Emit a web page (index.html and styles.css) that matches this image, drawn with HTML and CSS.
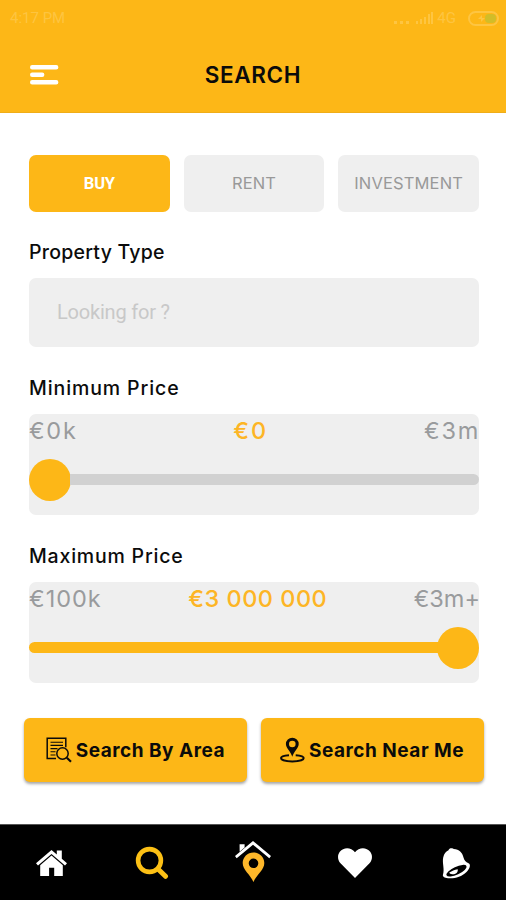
FILE: index.html
```html
<!DOCTYPE html>
<html lang="en">
<head>
<meta charset="utf-8">
<title>Search</title>
<link rel="stylesheet" href="styles.css">
</head>
<body>
<div class="app">
  <header class="header">
    <div class="status">
      <span>4:17 PM</span>
      <div class="status-right">
        <svg width="40" height="14" viewBox="0 0 40 14" fill="currentColor"><path d="M0 10h3v3H0zM6 10h3v3H6zM12 10h3v3h-3zM22 10h2v3h-2zM26 8h2v5h-2zM30 6h2v7h-2zM34 3h2v10h-2zM37 1h2v12h-2z"/></svg>
        <span>4G</span>
        <svg class="battery" width="31" height="15" viewBox="0 0 31 15"><rect x="1" y="1" width="29" height="13" rx="6.500" fill="none" stroke="currentColor" stroke-width="2"/><rect class="charge" x="17" y="3" width="11" height="9" rx="4"/><path d="M10 8l4-4v3h3l-4 4V8z" fill="currentColor"/></svg>
      </div>
    </div>
    <div class="title-bar">
      <svg class="menu" width="29" height="20" viewBox="0 0 29 20"><path d="M2.200 2.200h24M2.200 9.700h10M2.200 17.300h24"/></svg>
      <h1>SEARCH</h1>
    </div>
  </header>

  <main class="content">
    <div class="tabs">
      <div class="tab active">BUY</div>
      <div class="tab rent">RENT</div>
      <div class="tab">INVESTMENT</div>
    </div>

    <section class="group">
      <h2 class="l-type">Property Type</h2>
      <div class="field">Looking for ?</div>
    </section>

    <section class="group">
      <h2 class="l-min">Minimum Price</h2>
      <div class="range">
        <div class="prices short"><span>€0k</span><strong>€0</strong><span>€3m</span></div>
        <div class="slider"><i class="track"></i><i class="thumb"></i></div>
      </div>
    </section>

    <section class="group">
      <h2 class="l-max">Maximum Price</h2>
      <div class="range">
        <div class="prices"><span>€100k</span><strong>€3 000 000</strong><span class="limit">€3m+</span></div>
        <div class="slider full"><i class="track"></i><i class="thumb"></i></div>
      </div>
    </section>

    <div class="actions">
      <div class="button">
        <svg width="26" height="26" viewBox="0 0 26 26" fill="none" stroke="currentColor"><path stroke-width="1.500" d="M10 21.500H1.200V1.200h18.600v9"/><path stroke-width="1.100" d="M4.500 5.200H17M4.500 8.400H17M4.500 11.600h7M4.500 14.800h5M4.500 18h5"/><circle cx="16.500" cy="16.500" r="5.700" stroke-width="1.500"/><path stroke-width="2.200" d="M20.800 20.800l4.200 4"/></svg>
        <span>Search By Area</span>
      </div>
      <div class="button">
        <svg width="25" height="26" viewBox="0 0 25 26"><path fill="currentColor" fill-rule="evenodd" d="M12.300 0.700a6.400 6.400 0 0 0-6.400 6.400c0 4 5 7.700 6.400 12.700 1.400-5 6.400-8.700 6.400-12.700A6.400 6.400 0 0 0 12.300.7zm0 3a3.300 3.300 0 1 1 0 6.600 3.300 3.300 0 0 1 0-6.600z"/><path fill="none" stroke="currentColor" stroke-width="2" d="M9 18.200c-4.500.3-8 1.300-8 2.900 0 1.900 5 3.300 11.300 3.300S23.700 23 23.700 21.100c0-1.600-3.500-2.600-8-2.900"/></svg>
        <span>Search Near Me</span>
      </div>
    </div>
  </main>

  <nav class="nav">
    <a class="home"><svg width="33" height="28" viewBox="0 0 33 28" fill="currentColor"><path d="M1 14.300L16.500 1l5.300 4.500V1.400h5v8.400L32 14.300l-2 2.200L16.500 5 3 16.500z"/><path d="M5.200 16.200L16.500 6.600l11.300 9.600V27h-8.600v-8.200h-5.100V27H5.200z"/></svg></a>
    <a class="find"><svg width="34" height="34" viewBox="0 0 34 34" fill="none" stroke="currentColor"><circle cx="14.500" cy="14.500" r="11.400" stroke-width="4.600"/><path stroke-width="5" stroke-linecap="round" d="M23.500 23.500l7 6.800"/></svg></a>
    <a class="place"><svg width="38" height="43" viewBox="0 0 38 43"><path fill="#fff" d="M1 16L19 1l18 15-1.700 2.200L19 4.800 2.700 18.200z"/><path fill="#fff" d="M5.600 4.200h5v3.200l-5 4.300z"/><path class="pin" fill-rule="evenodd" d="M19.500 12.500c-6 0-10.800 4.700-10.800 10.500 0 7 7.300 11 10.800 19 3.500-8 10.800-12 10.800-19 0-5.800-4.800-10.500-10.800-10.500zm0 6a4.800 4.800 0 1 1 0 9.600 4.800 4.800 0 0 1 0-9.600z"/></svg></a>
    <a class="heart"><svg width="36" height="32" viewBox="0 0 36 32" fill="currentColor"><path d="M18 31L3.500 16.300C.5 13 .2 8 2.800 4.700 6.500.2 13.800-.2 18 5.200 22.200-.2 29.500.2 33.200 4.700 35.800 8 35.500 13 32.500 16.300z"/></svg></a>
    <a class="bell"><svg width="30" height="32" viewBox="0 0 30 32"><path fill="currentColor" d="M2 27.500C3.800 22 1 16 2.200 10.500 3 6.300 5.200 4.200 7.500 3.200 7.800.8 11.800.6 12.800 2.100c5.400 0 8.500 3.600 9.700 8.500.8 3 2.200 4.700 5 5.600 2.500 1 1.600 5.300-2 8.700-5 5-12.300 7-18.500 6.300C3.500 30.800 1.200 29.500 2 27.500z"/><ellipse cx="15.500" cy="23.700" rx="11" ry="3.900" transform="rotate(-25 15.500 23.700)" fill="#000"/><path fill="currentColor" d="M8.300 25.500c2.800-1.500 5-3 8.400-3.300.7 3.200-2.300 5.300-5.500 5-1.600-.1-2.600-.8-2.900-1.700z"/></svg></a>
  </nav>
</div>
</body>
</html>
```

FILE: styles.css
```css
* { box-sizing: border-box; }

body {
  margin: 0;
  background: #fff;
  color: #0b0b0b;
  font-family: Inter, "Liberation Sans", sans-serif;
}

.app {
  display: flex;
  flex-direction: column;
  width: 506px;
  height: 900px;
}

svg { display: block; flex: none; }

.header {
  height: 113px;
  background: #fdb717;
  border-bottom: 1px solid #f0ad18;
}

.status {
  display: flex;
  justify-content: space-between;
  height: 36px;
  padding: 0 7px 0 10px;
  align-items: center;
  font: 15px/36px Roboto, sans-serif;
  color: rgba(255, 218, 130, .4);
}

.status-right { display: flex; align-items: center; gap: 1px; }
.status-right span { margin-left: 2px; }
.battery { margin-left: 11px; }
.charge { fill: #a8c43a; opacity: .5; }

.title-bar {
  display: grid;
  grid-template-columns: 29px 1fr 29px;
  align-items: center;
  height: 76px;
  padding: 0 29px;
}

.menu { fill: none; stroke: #fff; stroke-width: 4.400px; stroke-linecap: round; margin: 2px 0 0 1px; }

h1 {
  margin: 0;
  font-size: 22.500px;
  font-weight: 600;
  line-height: 75px;
  letter-spacing: .6px;
  text-align: center;
}

.content { flex: 1; padding: 42px 27px 0 29px; }

.tabs {
  display: grid;
  grid-template-columns: repeat(3, 1fr);
  gap: 14px;
  height: 56px;
  padding-bottom: .4px;
}

.tab {
  border-radius: 7px;
  background: #efefef;
  color: #999;
  font-size: 16.500px;
  line-height: 57px;
  text-align: center;
  letter-spacing: .15px;
}

.tab.active {
  background: #fdb717;
  color: #fff;
  font-family: Roboto, sans-serif;
  font-weight: 700;
  letter-spacing: -.2px;
}

h2 {
  margin: 0;
  height: 67px;
  font-size: 19.500px;
  font-weight: 500;
  line-height: 82px;
}

.l-type { letter-spacing: .25px; }
.l-min { letter-spacing: .9px; }
.l-max { letter-spacing: .8px; }

.field {
  height: 69px;
  padding-left: 28px;
  border-radius: 7px;
  background: #efefef;
  color: #c8c8c8;
  font: 20px/68px Roboto, sans-serif;
  letter-spacing: -.2px;
}

.range {
  height: 101px;
  border-radius: 7px;
  background: #efefef;
}

.prices {
  display: flex;
  justify-content: space-between;
  height: 45px;
  font-size: 23.500px;
  line-height: 34px;
  letter-spacing: 1px;
  color: #999b9d;
}

.short { letter-spacing: 1.700px; }
.prices strong { color: #fdb525; font-weight: 500; letter-spacing: .5px; }
.short strong { letter-spacing: 2px; }
.prices span:last-child { margin-right: -1px; }
.prices .limit { letter-spacing: 0; margin-right: 0; }

.slider { display: flex; align-items: center; height: 41px; }
.track { flex: 1; height: 11px; border-radius: 0 6px 6px 0; background: #d1d1d1; }
.thumb { width: 42px; height: 42px; border-radius: 50%; background: #fdb717; }
.slider .thumb { order: -1; margin-right: -1px; }
.full .track { background: #fdb717; border-radius: 6px 0 0 6px; }
.full .thumb { order: 1; margin: 0 0 0 -1px; }

.actions {
  display: grid;
  grid-template-columns: 1fr 1fr;
  gap: 14px;
  margin: 35px -4.500px 0 -5px;
}

.button {
  display: flex;
  align-items: center;
  justify-content: center;
  gap: 4px;
  height: 64px;
  border-radius: 6px;
  background: #fdb717;
  box-shadow: 0 2px 3px rgba(0, 0, 0, .35);
  font-size: 19px;
  font-weight: 700;
  letter-spacing: .5px;
  white-space: nowrap;
}

.nav {
  display: grid;
  grid-template-columns: repeat(5, 1fr);
  height: 76px;
  background: #000;
  border-top: 1px solid #555;
  color: #fff;
}

.nav a { display: flex; align-items: center; justify-content: center; }
.find { color: #fcc015; }
.nav .home { padding-left: 1px; }
.nav .place { padding: 0 0 2px 1px; }
.nav .heart, .nav .bell { padding-left: 2px; }
.pin { fill: #fdb72a; }
```
